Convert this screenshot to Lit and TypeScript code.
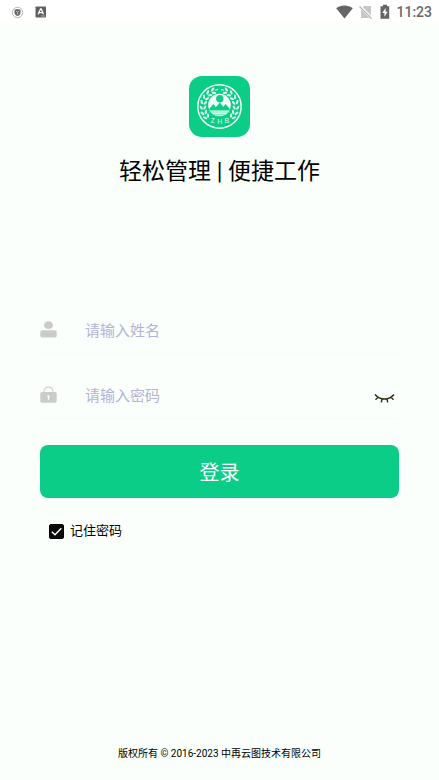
import { LitElement, html, svg, css } from "lit";
import { customElement, state } from "lit/decorators.js";

/* Angles (degrees from the top) at which a pair of laurel leaves sits. */
const LEAF_ANGLES = [22, 40, 58, 76, 94, 112, 128];

@customElement("status-bar")
class StatusBar extends LitElement {
  static styles = css`
    :host {
      display: flex;
      align-items: center;
      justify-content: space-between;
      height: 24px;
      padding: 0 7px 0 11px;
      background: #fff;
      color: #686868;
      font: 500 14px/24px Roboto, sans-serif;
    }
    .group {
      display: flex;
      align-items: center;
    }
    .left {
      gap: 11px;
    }
    .right {
      gap: 4px;
    }
    svg {
      display: block;
    }
  `;

  render() {
    return html`
      <div class="group left">
        <svg width="13" height="13" viewBox="0 0 13 13" aria-hidden="true">
          <circle cx="6.5" cy="6.5" r="5.2" fill="none" stroke="#b4b4b4" stroke-width="1" />
          <path d="M3.5 3.8 6.5 3l3 .8v2.8c0 1.7-1.2 2.8-3 3.5-1.8-.7-3-1.8-3-3.5z" fill="#686868" />
          <path d="M5.2 5l1.3 1.500L7.800 5M6.500 6.500v1.800" fill="none" stroke="#ddd" stroke-width=".7" />
        </svg>
        <svg width="12" height="12" viewBox="0 0 12 12" aria-hidden="true">
          <rect x=".5" y=".5" width="10.500" height="11" rx=".8" fill="#606060" />
          <path d="M3.200 8.300 5.600 2.800h.6l2.300 5.500M4.200 6.600h3.300" fill="none" stroke="#fff" stroke-width="1.300" />
          <path d="M6 10h4" stroke="#aaa" stroke-width="1" />
        </svg>
      </div>
      <div class="group right">
        <svg width="17" height="14" viewBox="0 0 17 14" aria-hidden="true">
          <path d="M.2 3.300C2.500 1.500 5.400.5 8.500.5s6 1 8.300 2.800L8.500 13.600z" fill="#666" />
        </svg>
        <svg width="17" height="16" viewBox="0 0 17 16" aria-hidden="true">
          <path d="M7 2h7v12H4V5z" fill="#c6c6c6" />
          <path d="M2.500 2 15 14.500" stroke="#fff" stroke-width="3" />
          <path d="M2.500 2.500 14.500 14.500" stroke="#b4b4b4" stroke-width="1.200" />
        </svg>
        <svg width="14" height="16" viewBox="0 0 14 16" aria-hidden="true">
          <path d="M5 .8h4v1.500h2.200v12.500H2.500V2.300H5z" fill="#666" />
          <path d="M7.600 4 4.300 9h2.100v3.700L9.700 7.700H7.600z" fill="#fff" />
        </svg>
        <span>11:23</span>
      </div>
    `;
  }
}

@customElement("brand-logo")
class BrandLogo extends LitElement {
  static styles = css`
    :host {
      display: block;
      width: 61px;
      height: 61px;
      border-radius: 13px;
      background: #0bcd88;
    }
    svg {
      display: block;
    }
    .letter {
      font: 7px "Liberation Sans", sans-serif;
      fill: #d8fbed;
      text-anchor: middle;
    }
  `;

  private leaf(angle: number) {
    const tilt = angle > 0 ? 1 : -1;
    return svg`
      <g transform="rotate(${angle} 30.5 30.5)">
        <ellipse cx="30.5" cy="12.2" rx="2.3" ry="1.1" transform="rotate(${tilt * 28} 30.5 12.2)" />
        <ellipse cx="30.5" cy="15.8" rx="2.3" ry="1.1" transform="rotate(${tilt * -32} 30.5 15.8)" />
      </g>`;
  }

  render() {
    return html`
      <svg width="61" height="61" viewBox="0 0 61 61" role="img" aria-label="ZHB">
        <circle cx="30.5" cy="30.5" r="21.700" fill="none" stroke="#f2fff9" stroke-width="1.500" />
        <g fill="#dcfbef">
          ${LEAF_ANGLES.map((a) => this.leaf(a))} ${LEAF_ANGLES.map((a) => this.leaf(-a))}
          <path d="M26 13.800l3-1 .3 1.200-3 .8zM35 13.800l-3-1-.3 1.200 3 .8z" />
        </g>
        <circle cx="30.5" cy="29" r="11.300" fill="#f4fffa" />
        <circle cx="30.8" cy="22.800" r="3.700" fill="#0bcd88" />
        <path
          d="M20.500 34.500v-2l4-4.500 2.300 3.300 4-4.800 3.500 4.300 2.200-2.800 4 4.500v2z"
          fill="#0bcd88"
        />
        <path d="M20 36h21M25 38.300h11" stroke="#5cdfb2" stroke-width=".9" />
        <text class="letter" x="23.700" y="47">Z</text>
        <text class="letter" x="30.800" y="48">H</text>
        <text class="letter" x="37.800" y="47">B</text>
      </svg>
    `;
  }
}

@customElement("app-root")
class AppRoot extends LitElement {
  static styles = css`
    :host {
      display: flex;
      flex-direction: column;
      min-height: 100vh;
      background: #fbfffc;
      color: #000;
      font-family: Roboto, "Noto Sans CJK SC", sans-serif;
    }
    main {
      flex: 1;
      display: flex;
      flex-direction: column;
      padding: 52px 40px 0;
    }
    .brand {
      display: flex;
      flex-direction: column;
      align-items: center;
      gap: 18px;
    }
    h1 {
      margin: 0;
      font-size: 23px;
      font-weight: 400;
      line-height: 34px;
    }
    form {
      display: flex;
      flex-direction: column;
      margin-top: 116px;
    }
    .field {
      display: flex;
      align-items: center;
      height: 48px;
      margin-bottom: 16px;
      border-bottom: 1px solid #fbf9f8;
    }
    .field svg {
      display: block;
      flex: none;
    }
    .field input {
      flex: 1;
      min-width: 0;
      margin: 0 0 0 28px;
      padding: 4px 0 0;
      border: 0;
      outline: 0;
      background: none;
      color: #222;
      font: inherit;
      font-size: 15px;
      line-height: 24px;
    }
    .field input::placeholder {
      color: #b3b2d6;
      opacity: 1;
    }
    .eye {
      margin: 8px 4px 0 0;
      padding: 0;
      border: 0;
      background: none;
    }
    .submit {
      height: 53px;
      margin-top: 10px;
      padding: 0;
      border: 0;
      border-radius: 8px;
      background: #0bcd88;
      color: #fff;
      font: inherit;
      font-size: 20px;
    }
    .remember {
      display: flex;
      align-items: center;
      align-self: flex-start;
      gap: 6px;
      margin: 23px 0 0 9px;
      font-size: 13px;
      line-height: 20px;
    }
    .remember input {
      appearance: none;
      width: 15px;
      height: 15px;
      margin: 0;
      border: 1px solid #000;
      border-radius: 2px;
      background: #fff;
    }
    .box {
      display: grid;
    }
    .box > * {
      grid-area: 1 / 1;
    }
    .box svg {
      pointer-events: none;
    }
    .remember input:checked {
      background: #0a0a0a;
    }
    footer {
      padding: 0 16px 18px;
      text-align: center;
      font-size: 10px;
      line-height: 16px;
    }
  `;

  @state() private visible = false;

  render() {
    return html`
      <status-bar></status-bar>
      <main>
        <div class="brand">
          <brand-logo></brand-logo>
          <h1>轻松管理 | 便捷工作</h1>
        </div>
        <form @submit=${(e: Event) => e.preventDefault()}>
          <div class="field">
            <svg width="17" height="17" viewBox="0 0 17 17" aria-hidden="true">
              <ellipse cx="8.500" cy="4.200" rx="4.500" ry="3.900" fill="#cbcbcb" />
              <rect x=".3" y="9.300" width="16.400" height="7.200" rx="1.800" fill="#cbcbcb" />
            </svg>
            <input type="text" placeholder="请输入姓名" aria-label="姓名" />
          </div>
          <div class="field">
            <svg width="17" height="17" viewBox="0 0 17 17" aria-hidden="true">
              <path d="M4 7V5.500C4 2.800 5.900 1.200 8.500 1.200S13 2.800 13 5.500V7" fill="none" stroke="#d2d2d2" stroke-width="1.200" />
              <rect x=".3" y="6" width="16.400" height="10.700" rx="1.800" fill="#cbcbcb" />
              <path d="M8.500 9.500v4.300M7.300 10.300h2.400" stroke="#fff" stroke-width="1.300" />
            </svg>
            <input
              type=${this.visible ? "text" : "password"}
              placeholder="请输入密码"
              aria-label="密码"
            />
            <button
              class="eye"
              type="button"
              aria-label="显示密码"
              @click=${() => (this.visible = !this.visible)}
            >
              <svg width="21" height="11" viewBox="0 0 21 11" aria-hidden="true">
                <path
                  d="M1 1.500C6 7.500 15 7.500 20 1.500M4 4.300 1.500 6.800M17 4.300l2.500 2.500M8 6 7.300 9.300M13 6l.7 3.300"
                  fill="none"
                  stroke="#2d2b10"
                  stroke-width="1.400"
                />
              </svg>
            </button>
          </div>
          <button class="submit" type="submit">登录</button>
          <label class="remember">
            <span class="box">
              <input type="checkbox" checked />
              <svg width="15" height="15" viewBox="0 0 15 15" aria-hidden="true">
                <path d="M2.800 7.700 6 10.800 12.300 4.300" fill="none" stroke="#fff" stroke-width="1.400" />
              </svg>
            </span>
            记住密码
          </label>
        </form>
      </main>
      <footer>版权所有 © 2016-2023 中再云图技术有限公司</footer>
    `;
  }
}
